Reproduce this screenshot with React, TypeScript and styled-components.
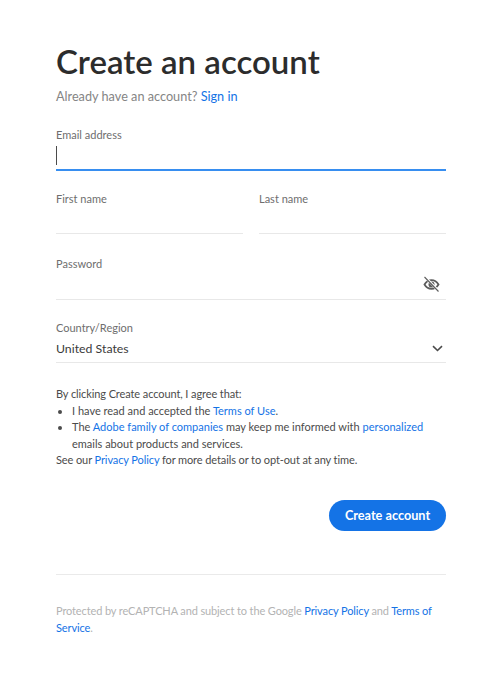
import React from 'react';
import styled, { createGlobalStyle } from 'styled-components';

const GlobalStyle = createGlobalStyle`
  html, body {
    margin: 0;
    padding: 0;
    background: #fff;
  }
  body {
    font-family: 'Lato', 'Liberation Sans', sans-serif;
  }
`;

const Page = styled.div`
  width: 500px;
  height: 675px;
  box-sizing: border-box;
  padding: 40px 54px 0 56px;
  overflow: hidden;
`;

const Title = styled.h1`
  margin: 0;
  font-size: 33px;
  line-height: 43px;
  font-weight: 600;
  color: #2c2c2c;
`;

const Subtitle = styled.p`
  margin: 3px 0 0;
  font-size: 12.7px;
  line-height: 20px;
  color: #858585;
`;

const Link = styled.a`
  color: #1473e6;
  text-decoration: none;
`;

const Form = styled.form`
  margin-top: 21px;
`;

const FieldRow = styled.div`
  display: flex;
  gap: 16px;
`;

const Field = styled.div<{ $height: number; $gap: number; $focused?: boolean }>`
  position: relative;
  flex: 1;
  height: ${(p) => p.$height}px;
  margin-bottom: ${(p) => p.$gap}px;
  border-bottom: ${(p) => (p.$focused ? '2px solid #378ef0' : '1px solid #e8e8e8')};
`;

const Label = styled.label`
  display: block;
  font-size: 11px;
  line-height: 16px;
  color: #6e6e6e;
`;

const Caret = styled.span`
  display: block;
  width: 1px;
  height: 19px;
  margin-top: 3px;
  background: #4b4b4b;
`;

const Value = styled.div`
  margin-top: 3px;
  font-size: 12.3px;
  line-height: 20px;
  color: #3a3a3a;
`;

const FieldIcon = styled.span<{ $right: number; $bottom: number }>`
  position: absolute;
  right: ${(p) => p.$right}px;
  bottom: ${(p) => p.$bottom}px;
  display: flex;
`;

const Legal = styled.div`
  font-size: 11px;
  letter-spacing: -0.1px;
  line-height: 16.5px;
  color: #4b4b4b;
`;

const LegalList = styled.ul`
  margin: 0;
  padding: 0 0 0 16px;
  letter-spacing: 0;
`;

const Actions = styled.div`
  display: flex;
  justify-content: flex-end;
  margin-top: 31px;
`;

const PrimaryButton = styled.button`
  width: 117px;
  height: 31px;
  border: 0;
  border-radius: 16px;
  background: #1473e6;
  color: #fff;
  font-family: inherit;
  font-size: 12.7px;
  font-weight: 700;
  padding: 0;
`;

const Footer = styled.footer`
  margin-top: 43px;
  padding-top: 27px;
  border-top: 1px solid #eaeaea;
  font-size: 11px;
  letter-spacing: -0.12px;
  line-height: 17px;
  color: #b3b3b3;
`;

const EyeOff = () => (
  <svg width="17" height="17" viewBox="0 0 17 17" fill="none">
    <path
      d="M1.5 8.5C3.2 5.6 5.6 4.2 8.5 4.2s5.3 1.4 7 4.3c-1.7 2.9-4.1 4.3-7 4.3s-5.3-1.4-7-4.3z"
      stroke="#5c5c5c"
      strokeWidth="1.8"
    />
    <circle cx="8.5" cy="8.5" r="3" fill="#5c5c5c" />
    <path d="M2.2 1.2l13.5 14" stroke="#fff" strokeWidth="2.4" />
    <path d="M1.5 1l14 14.5" stroke="#5c5c5c" strokeWidth="1.1" />
  </svg>
);

const Chevron = () => (
  <svg width="11" height="7" viewBox="0 0 11 7" fill="none">
    <path d="M1 1.2l4.5 4.3L10 1.2" stroke="#4b4b4b" strokeWidth="1.6" />
  </svg>
);

export default function App() {
  return (
    <>
      <GlobalStyle />
      <Page>
        <Title>Create an account</Title>
        <Subtitle>
          Already have an account? <Link href="#">Sign in</Link>
        </Subtitle>
        <Form>
          <Field $height={42} $gap={20} $focused>
            <Label>Email address</Label>
            <Caret />
          </Field>
          <FieldRow>
            <Field $height={42} $gap={22}>
              <Label>First name</Label>
            </Field>
            <Field $height={42} $gap={22}>
              <Label>Last name</Label>
            </Field>
          </FieldRow>
          <Field $height={43} $gap={20}>
            <Label>Password</Label>
            <FieldIcon $right={6} $bottom={6}>
              <EyeOff />
            </FieldIcon>
          </Field>
          <Field $height={42} $gap={23}>
            <Label>Country/Region</Label>
            <Value>United States</Value>
            <FieldIcon $right={3} $bottom={10}>
              <Chevron />
            </FieldIcon>
          </Field>
          <Legal>
            By clicking Create account, I agree that:
            <LegalList>
              <li>
                I have read and accepted the <Link href="#">Terms of Use</Link>.
              </li>
              <li>
                The <Link href="#">Adobe family of companies</Link> may keep me informed with{' '}
                <Link href="#">personalized</Link> emails about products and services.
              </li>
            </LegalList>
            See our <Link href="#">Privacy Policy</Link> for more details or to opt-out at any time.
          </Legal>
          <Actions>
            <PrimaryButton type="button">Create account</PrimaryButton>
          </Actions>
        </Form>
        <Footer>
          Protected by reCAPTCHA and subject to the Google <Link href="#">Privacy Policy</Link> and{' '}
          <Link href="#">Terms of Service</Link>.
        </Footer>
      </Page>
    </>
  );
}
